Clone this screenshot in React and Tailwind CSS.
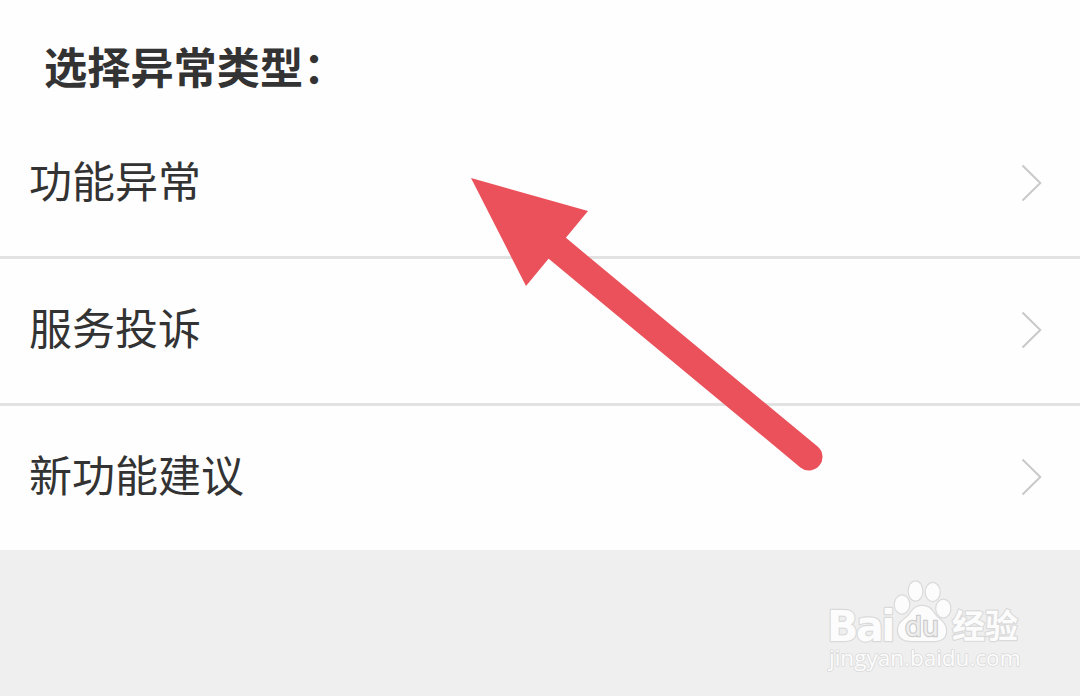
const options = ["功能异常", "服务投诉", "新功能建议"];

function ChevronIcon() {
  return (
    <svg width="22" height="40" viewBox="0 0 22 40" fill="none" className="shrink-0">
      <path d="M2.5 2.5 L20.3 20 L2.5 37.5" stroke="#c9c9c9" strokeWidth="2" />
    </svg>
  );
}

function OptionRow({ label }) {
  return (
    <li className="h-[147px] shrink-0 flex items-center justify-between pl-[29px] pr-[38px] pb-[3px] border-b-3 border-[#e2e2e2] last:h-36 last:border-b-0">
      <span className="mb-1.5 text-[43px] leading-none whitespace-nowrap">{label}</span>
      <ChevronIcon />
    </li>
  );
}

function Arrow() {
  return (
    <svg width="1080" height="696" viewBox="0 0 1080 696" className="absolute left-0 top-0 pointer-events-none">
      <path d="M557 248 L809 457" stroke="#ea515b" strokeWidth="27" strokeLinecap="round" />
      <path d="M471 178 L588 211 L526 286 Z" fill="#ea515b" />
    </svg>
  );
}

function Watermark() {
  return (
    <svg width="220" height="120" viewBox="0 0 220 120" className="absolute left-[815px] top-[570px]">
      <g fill="#fcfcfc" stroke="#dadada" strokeWidth="2.4" paintOrder="stroke" strokeLinejoin="round">
        <text x="12" y="70.5" fontSize="42" fontWeight="700" letterSpacing="-2.5" textLength="66" lengthAdjust="spacingAndGlyphs" className="font-['DejaVu_Sans',sans-serif]">Bai</text>
        {/* paw */}
        <ellipse cx="87" cy="34.5" rx="7.2" ry="9" />
        <ellipse cx="100.5" cy="21" rx="6.8" ry="9.6" />
        <ellipse cx="117.7" cy="22" rx="7" ry="9" />
        <ellipse cx="128.3" cy="38.5" rx="7" ry="8.8" />
        <path d="M107 36 C114 36 117 40 121 46 C125 50 131 53 131 61 C131 69 125 71 118 71 L97 71 C89 71 83 68 83 60 C83 52 90 50 94 45 C98 40 100 36 107 36 Z" />
        <text x="137" y="67.5" fontSize="33" fontWeight="700" textLength="66" lengthAdjust="spacingAndGlyphs">经验</text>
        <text x="14" y="96" fontSize="22" strokeWidth="1.6" textLength="191.5" lengthAdjust="spacingAndGlyphs" className="font-['Open_Sans',sans-serif]">jingyan.baidu.com</text>
      </g>
      <text x="90" y="65.5" fontSize="26" fill="#eeeeee" stroke="#cccccc" strokeWidth="2.4" paintOrder="stroke" textLength="34" lengthAdjust="spacingAndGlyphs" className="font-['DejaVu_Sans',sans-serif]">du</text>
    </svg>
  );
}

function App() {
  return (
    <div className="relative w-[1080px] h-[696px] overflow-hidden bg-[#efefef] text-[#333] font-['Noto_Sans_CJK_SC',sans-serif]">
      <main className="bg-[#fefefe]">
        <h1 className="h-28 pl-11 pt-11 text-[43.2px] leading-none font-bold whitespace-nowrap">选择异常类型：</h1>
        <ul>
          {options.map((label) => (
            <OptionRow key={label} label={label} />
          ))}
        </ul>
      </main>
      <Arrow />
      <Watermark />
    </div>
  );
}

export default App;
